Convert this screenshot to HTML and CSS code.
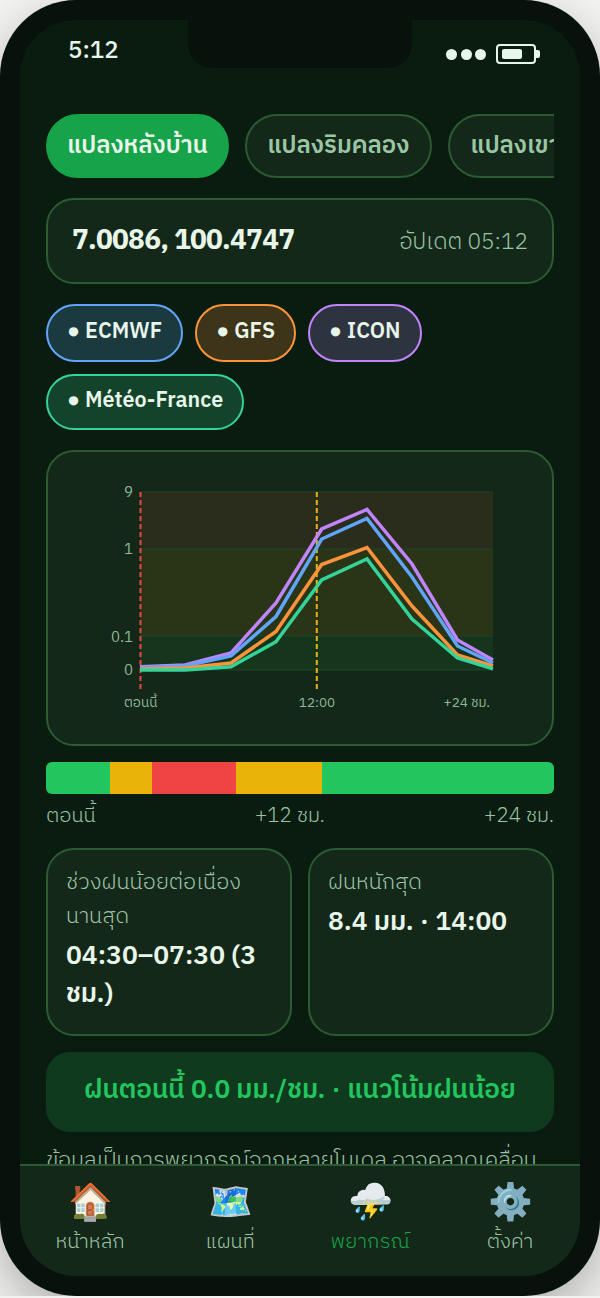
FILE: index.html
```html
<!DOCTYPE html>
<html lang="th">
<head>
	<meta charset="utf-8">
	<title>พยากรณ์ฝน</title>
	<link rel="stylesheet" href="styles.css">
</head>
<body>

	<div class="phone">
		<div class="screen">
			<div class="notch"></div>

			<section class="status">
				<span class="time">5:12</span>
				<div class="status-right">
					<span class="dot"></span>
					<span class="dot"></span>
					<span class="dot"></span>
					<span class="battery"><span class="battery-fill"></span></span>
				</div>
			</section>

			<section class="main">
				<div class="tabs">
					<span class="tab active">แปลงหลังบ้าน</span>
					<span class="tab">แปลงริมคลอง</span>
					<span class="tab">แปลงเขาหลัง</span>
				</div>

				<div class="card location">
					<span class="coords">7.0086, 100.4747</span>
					<span class="updated">อัปเดต 05:12</span>
				</div>

				<div class="chips">
					<span class="chip chip-blue">● ECMWF</span>
					<span class="chip chip-orange">● GFS</span>
					<span class="chip chip-purple">● ICON</span>
					<span class="chip chip-green">● Météo-France</span>
				</div>

				<div class="card chart-card">
					<svg class="chart" width="504" height="292" viewBox="48 452 504 292">
						<rect class="band-red" x="140" y="492" width="353" height="57"/>
						<rect class="band-yellow" x="140" y="549" width="353" height="87"/>
						<rect class="band-green" x="140" y="636" width="353" height="34"/>
						<line class="grid" x1="140" y1="492" x2="493" y2="492"/>
						<line class="grid" x1="140" y1="549" x2="493" y2="549"/>
						<line class="grid" x1="140" y1="636" x2="493" y2="636"/>
						<line class="grid" x1="140" y1="670" x2="493" y2="670"/>

						<line class="mark-now" x1="140.5" y1="492" x2="140.5" y2="690"/>
						<line class="mark-noon" x1="316.8" y1="492" x2="316.8" y2="690"/>

						<polyline class="line-purple" points="140,666.7 185,665 231,653 276,603 321.7,529 367,509.5 412,564 457.5,640 493,660"/>
						<polyline class="line-blue" points="140,667.5 185,666 231,656 276,616.5 321.7,539 367,518.5 412,577 457.5,646 493,663"/>
						<polyline class="line-orange" points="140,669 185,668 231,663 276,631.5 321.7,564.5 367,547.5 412,606 457.5,655 493,666"/>
						<polyline class="line-green" points="140,670 185,670 231,666.7 276,641.7 321.7,580 367,559 412,619 457.5,658 493,668.7"/>

						<text class="axis" x="133" y="497" text-anchor="end">9</text>
						<text class="axis" x="133" y="554" text-anchor="end">1</text>
						<text class="axis" x="133" y="642" text-anchor="end">0.1</text>
						<text class="axis" x="133" y="675" text-anchor="end">0</text>
						<text class="axis-x" x="124" y="707">ตอนนี้</text>
						<text class="axis-x" x="317" y="707" text-anchor="middle">12:00</text>
						<text class="axis-x" x="490" y="707" text-anchor="end">+24 ชม.</text>
					</svg>
				</div>

				<div class="strip">
					<span class="seg seg-green" style="width: 64px"></span>
					<span class="seg seg-yellow" style="width: 42px"></span>
					<span class="seg seg-red" style="width: 84px"></span>
					<span class="seg seg-yellow" style="width: 86px"></span>
					<span class="seg seg-green" style="width: 232px"></span>
				</div>
				<div class="strip-labels">
					<span>ตอนนี้</span>
					<span>+12 ชม.</span>
					<span>+24 ชม.</span>
				</div>

				<div class="stats">
					<div class="card stat">
						<p class="stat-label">ช่วงฝนน้อยต่อเนื่องนานสุด</p>
						<p class="stat-value">04:30–07:30 (3 ชม.)</p>
					</div>
					<div class="card stat">
						<p class="stat-label">ฝนหนักสุด</p>
						<p class="stat-value">8.4 มม. · 14:00</p>
					</div>
				</div>

				<div class="banner">ฝนตอนนี้ 0.0 มม./ชม. · แนวโน้มฝนน้อย</div>

				<p class="note">ข้อมูลเป็นการพยากรณ์จากหลายโมเดล อาจคลาดเคลื่อน</p>
			</section>

			<section class="nav">
				<div class="nav-item"><span class="nav-icon">🏠</span><span>หน้าหลัก</span></div>
				<div class="nav-item"><span class="nav-icon">🗺️</span><span>แผนที่</span></div>
				<div class="nav-item current"><span class="nav-icon">⛈️</span><span>พยากรณ์</span></div>
				<div class="nav-item"><span class="nav-icon">⚙️</span><span>ตั้งค่า</span></div>
			</section>
		</div>
	</div>

</body>
</html>
```

FILE: styles.css
```css
* {
	margin: 0;
	padding: 0;
	box-sizing: border-box;
}

body {
	background: #f2f3f0;
	font-family: "IBM Plex Sans Thai", "IBM Plex Sans", sans-serif;
	color: #e8f5e9;
}

.phone {
	width: 600px;
	height: 1296px;
	padding: 20px;
	background: #06120b;
	border-radius: 76px;
	box-shadow: 0 18px 48px rgba(0, 0, 0, 0.28);
}

.screen {
	position: relative;
	display: flex;
	flex-direction: column;
	height: 100%;
	background: #0a1c0f;
	border-radius: 56px;
	overflow: hidden;
}

.notch {
	position: absolute;
	top: 0;
	left: 168px;
	width: 224px;
	height: 48px;
	background: #06120b;
	border-radius: 0 0 24px 24px;
}

/* status bar */
.status {
	display: flex;
	justify-content: space-between;
	align-items: center;
	height: 74px;
	padding: 0 44px 6px 48px;
	flex-shrink: 0;
}

.time {
	font-size: 24px;
	font-weight: 500;
	margin-bottom: 6px;
}

.status-right {
	display: flex;
	align-items: center;
	gap: 3.7px;
}

.dot {
	width: 11px;
	height: 11px;
	border-radius: 50%;
	background: #e8f5e9;
}

.battery {
	position: relative;
	width: 40px;
	height: 20px;
	margin-left: 6px;
	padding: 3px 4px;
	border: 2px solid #e8f5e9;
	border-radius: 4px;
}

.battery:after {
	content: "";
	position: absolute;
	top: 4px;
	right: -6px;
	width: 4px;
	height: 8px;
	background: #e8f5e9;
	border-radius: 0 2px 2px 0;
}

.battery-fill {
	display: block;
	width: 20px;
	height: 10px;
	background: #e8f5e9;
	border-radius: 2px;
}

/* scrolling part */
.main {
	flex: 1;
	min-height: 0;
	overflow: hidden;
	padding: 20px 26px 0;
}

.tabs {
	display: flex;
	gap: 16px;
	overflow: hidden;
}

.tab {
	flex-shrink: 0;
	height: 64px;
	padding: 0 20.5px;
	display: flex;
	align-items: center;
	font-size: 24px;
	font-weight: 600;
	color: #9cc5a6;
	background: #132818;
	border: 2px solid #2b5a33;
	border-radius: 32px;
	white-space: nowrap;
}

.tab.active {
	padding: 0 19px;
	background: #16a34a;
	border-color: #16a34a;
	color: #e8f5e9;
}

.card {
	background: #132818;
	border: 2px solid #2b5a33;
	border-radius: 28px;
}

.location {
	display: flex;
	justify-content: space-between;
	align-items: center;
	height: 86px;
	margin-top: 20px;
	padding: 0 24px;
}

.coords {
	font-size: 28px;
	font-weight: 700;
	letter-spacing: -0.75px;
}

.updated {
	font-size: 22.6px;
	font-weight: 300;
	padding-top: 3px;
	color: #9cc2a6;
}

.chips {
	display: flex;
	flex-wrap: wrap;
	gap: 12px;
	margin-top: 20px;
}

.chip {
	height: 58px;
	padding: 0 19px 3px;
	display: flex;
	align-items: center;
	font-size: 21.5px;
	font-weight: 600;
	border: 2px solid;
	border-radius: 29px;
	white-space: nowrap;
}

.chip-blue { background: #1b3a40; border-color: #60a5fa; }
.chip-orange { background: #3d3419; border-color: #fb923c; }
.chip-purple { background: #2e3340; border-color: #c084fc; }
.chip-green { background: #14432c; border-color: #34d399; height: 56px; }

.chart-card {
	height: 296px;
	margin-top: 20px;
}

.chart {
	display: block;
}

.band-red { fill: #2a2c1c; }
.band-yellow { fill: #2a3518; }
.band-green { fill: #15361c; }

.grid {
	stroke: #1f4526;
	stroke-width: 1;
}

.mark-now, .mark-noon {
	stroke-width: 2;
	stroke-dasharray: 5 3;
}

.mark-now { stroke: #ef4444; }
.mark-noon { stroke: #eab308; }

polyline {
	fill: none;
	stroke-width: 3.5;
}

.line-purple { stroke: #c084fc; }
.line-blue { stroke: #60a5fa; }
.line-orange { stroke: #fb923c; }
.line-green { stroke: #34d399; }

.axis {
	font-size: 15px;
	fill: #8fb79a;
}

.axis-x {
	font-size: 13.5px;
	fill: #8fb79a;
}

.strip {
	display: flex;
	height: 32px;
	margin-top: 16px;
	border-radius: 6px;
	overflow: hidden;
}

.seg-green { background: #22c55e; }
.seg-yellow { background: #eab308; }
.seg-red { background: #ef4444; }

.strip-labels {
	display: flex;
	justify-content: space-between;
	margin-top: 7px;
	font-size: 20.5px;
	font-weight: 300;
	line-height: 30px;
	color: #9cc2a6;
}

.stats {
	display: flex;
	gap: 16px;
	margin-top: 17px;
}

.stat {
	flex: 1;
	height: 188px;
	padding: 16px 18px;
}

.stat-label {
	font-size: 22px;
	font-weight: 300;
	line-height: 34px;
	color: #9cc2a6;
}

.stat-value {
	margin-top: 4px;
	font-size: 26.4px;
	font-weight: 600;
	line-height: 38px;
}

.banner {
	height: 80px;
	margin-top: 16px;
	padding-bottom: 4px;
	display: flex;
	align-items: center;
	justify-content: center;
	font-size: 26.2px;
	font-weight: 600;
	color: #22c55e;
	background: #0f3a1e;
	border-radius: 24px;
}

.note {
	margin-top: 12px;
	font-size: 22px;
	font-weight: 300;
	line-height: 34px;
	color: #9cc2a6;
}

/* bottom nav */
.nav {
	display: flex;
	height: 112px;
	flex-shrink: 0;
	background: #132818;
	border-top: 2px solid #2b5a33;
}

.nav-item {
	flex: 1;
	display: flex;
	flex-direction: column;
	align-items: center;
	gap: 1px;
	padding-top: 14px;
	font-size: 20.5px;
	font-weight: 300;
	color: #9cc2a6;
}

.nav-item.current {
	color: #16a34a;
}

.nav-icon {
	width: 44px;
	text-align: center;
	font-size: 36px;
	line-height: 44px;
	font-family: "Noto Color Emoji", sans-serif;
}
```
